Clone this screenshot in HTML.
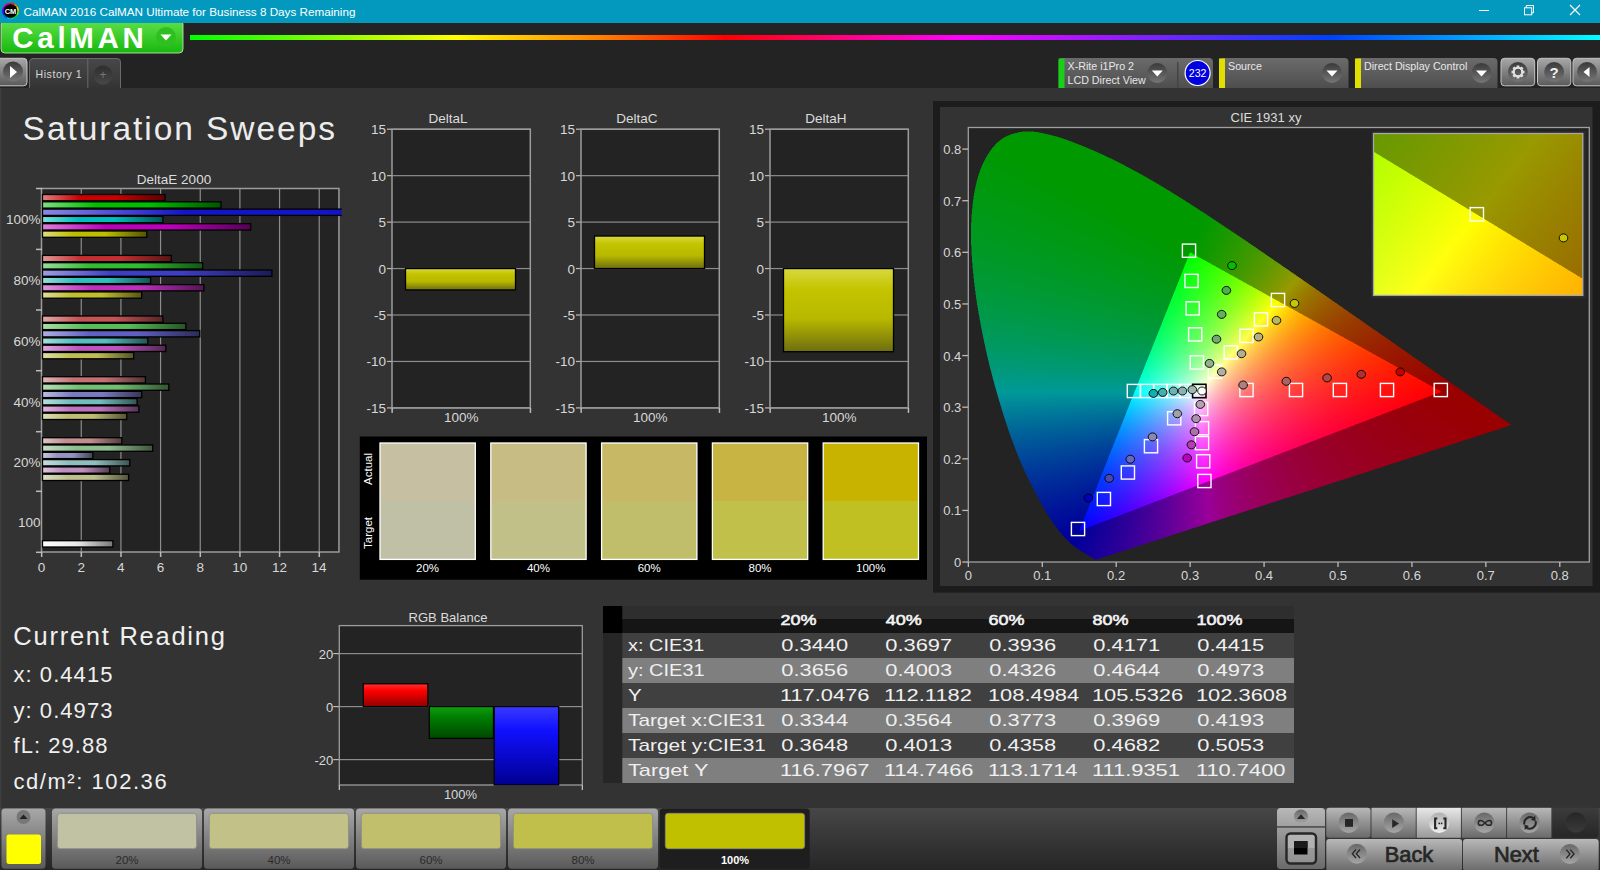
<!DOCTYPE html>
<html><head><meta charset="utf-8"><style>
html,body{margin:0;padding:0;background:#232323;width:1600px;height:870px;overflow:hidden}
svg{position:absolute;left:0;top:0}
text{font-family:"Liberation Sans", sans-serif}
canvas{position:absolute}
</style></head><body>
<svg width="1600" height="870" viewBox="0 0 1600 870"><defs><linearGradient id="rainbow" x1="0" y1="0" x2="1" y2="0"><stop offset="0" stop-color="#00ff00"/><stop offset="0.1879432624113475" stop-color="#ffff00"/><stop offset="0.2907801418439716" stop-color="#ff8000"/><stop offset="0.37943262411347517" stop-color="#ff0000"/><stop offset="0.5460992907801419" stop-color="#ff00ff"/><stop offset="0.8085106382978723" stop-color="#0040ff"/><stop offset="1" stop-color="#00ffff"/></linearGradient><linearGradient id="greenbtn" x1="0" y1="0" x2="0" y2="1"><stop offset="0" stop-color="#5fe04a"/><stop offset="0.5" stop-color="#3ccc2c"/><stop offset="1" stop-color="#16b80e"/></linearGradient><linearGradient id="devbox" x1="0" y1="0" x2="0" y2="1"><stop offset="0" stop-color="#6b6b6b"/><stop offset="1" stop-color="#4e4e4e"/></linearGradient><linearGradient id="yellowbar" x1="0" y1="0" x2="0" y2="1"><stop offset="0" stop-color="#d8d840"/><stop offset="0.25" stop-color="#c4c400"/><stop offset="0.6" stop-color="#b8b800"/><stop offset="1" stop-color="#6e6e10"/></linearGradient><linearGradient id="redbar" x1="0" y1="0" x2="0" y2="1"><stop offset="0" stop-color="#ff3030"/><stop offset="0.3" stop-color="#ff0000"/><stop offset="1" stop-color="#900000"/></linearGradient><linearGradient id="greenbar2" x1="0" y1="0" x2="0" y2="1"><stop offset="0" stop-color="#10a010"/><stop offset="0.3" stop-color="#008000"/><stop offset="1" stop-color="#004800"/></linearGradient><linearGradient id="bluebar2" x1="0" y1="0" x2="0" y2="1"><stop offset="0" stop-color="#3a3aff"/><stop offset="0.3" stop-color="#1010ff"/><stop offset="1" stop-color="#000090"/></linearGradient><linearGradient id="hdr" x1="0" y1="0" x2="0" y2="1"><stop offset="0" stop-color="#2e2e2e"/><stop offset="0.48" stop-color="#2e2e2e"/><stop offset="0.48" stop-color="#151515"/><stop offset="1" stop-color="#151515"/></linearGradient><linearGradient id="btn" x1="0" y1="0" x2="0" y2="1"><stop offset="0" stop-color="#a8a8a8"/><stop offset="1" stop-color="#5a5a5a"/></linearGradient><linearGradient id="bbar" x1="0" y1="0" x2="0" y2="1"><stop offset="0" stop-color="#474747"/><stop offset="0.5" stop-color="#363636"/><stop offset="1" stop-color="#262626"/></linearGradient><linearGradient id="circ" x1="0" y1="0" x2="0" y2="1"><stop offset="0" stop-color="#3a3a3a"/><stop offset="1" stop-color="#767676"/></linearGradient><linearGradient id="circ2" x1="0" y1="0" x2="0" y2="1"><stop offset="0" stop-color="#686868"/><stop offset="1" stop-color="#a6a6a6"/></linearGradient><linearGradient id="circhi" x1="0" y1="0" x2="0" y2="1"><stop offset="0" stop-color="#b0b0b0"/><stop offset="1" stop-color="#f0f0f0"/></linearGradient><linearGradient id="darkbtn" x1="0" y1="0" x2="0" y2="1"><stop offset="0" stop-color="#3c3c3c"/><stop offset="1" stop-color="#262626"/></linearGradient><linearGradient id="darkcirc" x1="0" y1="0" x2="0" y2="1"><stop offset="0" stop-color="#262626"/><stop offset="1" stop-color="#3a3a3a"/></linearGradient><linearGradient id="sqbtn" x1="0" y1="0" x2="0" y2="1"><stop offset="0" stop-color="#b4b4b4"/><stop offset="0.5" stop-color="#b0b0b0"/><stop offset="0.5" stop-color="#9a9a9a"/><stop offset="1" stop-color="#909090"/></linearGradient><linearGradient id="tabg" x1="0" y1="0" x2="0" y2="1"><stop offset="0" stop-color="#484848"/><stop offset="1" stop-color="#343434"/></linearGradient><linearGradient id="plusc" x1="0" y1="0" x2="0" y2="1"><stop offset="0" stop-color="#2e2e2e"/><stop offset="1" stop-color="#484848"/></linearGradient><linearGradient id="btnsel" x1="0" y1="0" x2="0" y2="1"><stop offset="0" stop-color="#2a2a2a"/><stop offset="1" stop-color="#1a1a1a"/></linearGradient><linearGradient id="ctl" x1="0" y1="0" x2="0" y2="1"><stop offset="0" stop-color="#b8b8b8"/><stop offset="1" stop-color="#6a6a6a"/></linearGradient><linearGradient id="ctlhi" x1="0" y1="0" x2="0" y2="1"><stop offset="0" stop-color="#e8e8e8"/><stop offset="1" stop-color="#9a9a9a"/></linearGradient><linearGradient id="g00" x1="0" y1="0" x2="1" y2="0"><stop offset="0" stop-color="rgb(227, 127, 127)"/><stop offset="0.3" stop-color="rgb(200, 0, 0)"/><stop offset="0.6" stop-color="rgb(200, 0, 0)"/><stop offset="1" stop-color="rgb(90, 0, 0)"/></linearGradient><linearGradient id="g01" x1="0" y1="0" x2="1" y2="0"><stop offset="0" stop-color="rgb(127, 222, 127)"/><stop offset="0.3" stop-color="rgb(0, 190, 0)"/><stop offset="0.6" stop-color="rgb(0, 190, 0)"/><stop offset="1" stop-color="rgb(0, 85, 0)"/></linearGradient><linearGradient id="g02" x1="0" y1="0" x2="1" y2="0"><stop offset="0" stop-color="rgb(137, 137, 227)"/><stop offset="0.3" stop-color="rgb(20, 20, 200)"/><stop offset="0.6" stop-color="rgb(20, 20, 200)"/><stop offset="1" stop-color="rgb(9, 9, 90)"/></linearGradient><linearGradient id="g03" x1="0" y1="0" x2="1" y2="0"><stop offset="0" stop-color="rgb(127, 222, 222)"/><stop offset="0.3" stop-color="rgb(0, 190, 190)"/><stop offset="0.6" stop-color="rgb(0, 190, 190)"/><stop offset="1" stop-color="rgb(0, 85, 85)"/></linearGradient><linearGradient id="g04" x1="0" y1="0" x2="1" y2="0"><stop offset="0" stop-color="rgb(222, 127, 222)"/><stop offset="0.3" stop-color="rgb(190, 0, 190)"/><stop offset="0.6" stop-color="rgb(190, 0, 190)"/><stop offset="1" stop-color="rgb(85, 0, 85)"/></linearGradient><linearGradient id="g05" x1="0" y1="0" x2="1" y2="0"><stop offset="0" stop-color="rgb(222, 222, 127)"/><stop offset="0.3" stop-color="rgb(190, 190, 0)"/><stop offset="0.6" stop-color="rgb(190, 190, 0)"/><stop offset="1" stop-color="rgb(85, 85, 0)"/></linearGradient><linearGradient id="g10" x1="0" y1="0" x2="1" y2="0"><stop offset="0" stop-color="rgb(226, 151, 151)"/><stop offset="0.3" stop-color="rgb(197, 47, 47)"/><stop offset="0.6" stop-color="rgb(197, 47, 47)"/><stop offset="1" stop-color="rgb(88, 21, 21)"/></linearGradient><linearGradient id="g11" x1="0" y1="0" x2="1" y2="0"><stop offset="0" stop-color="rgb(151, 222, 151)"/><stop offset="0.3" stop-color="rgb(47, 190, 47)"/><stop offset="0.6" stop-color="rgb(47, 190, 47)"/><stop offset="1" stop-color="rgb(21, 85, 21)"/></linearGradient><linearGradient id="g12" x1="0" y1="0" x2="1" y2="0"><stop offset="0" stop-color="rgb(158, 158, 226)"/><stop offset="0.3" stop-color="rgb(62, 62, 197)"/><stop offset="0.6" stop-color="rgb(62, 62, 197)"/><stop offset="1" stop-color="rgb(27, 27, 88)"/></linearGradient><linearGradient id="g13" x1="0" y1="0" x2="1" y2="0"><stop offset="0" stop-color="rgb(151, 222, 222)"/><stop offset="0.3" stop-color="rgb(47, 190, 190)"/><stop offset="0.6" stop-color="rgb(47, 190, 190)"/><stop offset="1" stop-color="rgb(21, 85, 85)"/></linearGradient><linearGradient id="g14" x1="0" y1="0" x2="1" y2="0"><stop offset="0" stop-color="rgb(222, 151, 222)"/><stop offset="0.3" stop-color="rgb(190, 47, 190)"/><stop offset="0.6" stop-color="rgb(190, 47, 190)"/><stop offset="1" stop-color="rgb(85, 21, 85)"/></linearGradient><linearGradient id="g15" x1="0" y1="0" x2="1" y2="0"><stop offset="0" stop-color="rgb(222, 222, 151)"/><stop offset="0.3" stop-color="rgb(190, 190, 47)"/><stop offset="0.6" stop-color="rgb(190, 190, 47)"/><stop offset="1" stop-color="rgb(85, 85, 21)"/></linearGradient><linearGradient id="g20" x1="0" y1="0" x2="1" y2="0"><stop offset="0" stop-color="rgb(225, 170, 170)"/><stop offset="0.3" stop-color="rgb(195, 85, 85)"/><stop offset="0.6" stop-color="rgb(195, 85, 85)"/><stop offset="1" stop-color="rgb(87, 38, 38)"/></linearGradient><linearGradient id="g21" x1="0" y1="0" x2="1" y2="0"><stop offset="0" stop-color="rgb(170, 222, 170)"/><stop offset="0.3" stop-color="rgb(85, 190, 85)"/><stop offset="0.6" stop-color="rgb(85, 190, 85)"/><stop offset="1" stop-color="rgb(38, 85, 38)"/></linearGradient><linearGradient id="g22" x1="0" y1="0" x2="1" y2="0"><stop offset="0" stop-color="rgb(175, 175, 225)"/><stop offset="0.3" stop-color="rgb(96, 96, 195)"/><stop offset="0.6" stop-color="rgb(96, 96, 195)"/><stop offset="1" stop-color="rgb(43, 43, 87)"/></linearGradient><linearGradient id="g23" x1="0" y1="0" x2="1" y2="0"><stop offset="0" stop-color="rgb(170, 222, 222)"/><stop offset="0.3" stop-color="rgb(85, 190, 190)"/><stop offset="0.6" stop-color="rgb(85, 190, 190)"/><stop offset="1" stop-color="rgb(38, 85, 85)"/></linearGradient><linearGradient id="g24" x1="0" y1="0" x2="1" y2="0"><stop offset="0" stop-color="rgb(222, 170, 222)"/><stop offset="0.3" stop-color="rgb(190, 85, 190)"/><stop offset="0.6" stop-color="rgb(190, 85, 190)"/><stop offset="1" stop-color="rgb(85, 38, 85)"/></linearGradient><linearGradient id="g25" x1="0" y1="0" x2="1" y2="0"><stop offset="0" stop-color="rgb(222, 222, 170)"/><stop offset="0.3" stop-color="rgb(190, 190, 85)"/><stop offset="0.6" stop-color="rgb(190, 190, 85)"/><stop offset="1" stop-color="rgb(85, 85, 38)"/></linearGradient><linearGradient id="g30" x1="0" y1="0" x2="1" y2="0"><stop offset="0" stop-color="rgb(224, 184, 184)"/><stop offset="0.3" stop-color="rgb(194, 114, 114)"/><stop offset="0.6" stop-color="rgb(194, 114, 114)"/><stop offset="1" stop-color="rgb(87, 51, 51)"/></linearGradient><linearGradient id="g31" x1="0" y1="0" x2="1" y2="0"><stop offset="0" stop-color="rgb(184, 222, 184)"/><stop offset="0.3" stop-color="rgb(114, 190, 114)"/><stop offset="0.6" stop-color="rgb(114, 190, 114)"/><stop offset="1" stop-color="rgb(51, 85, 51)"/></linearGradient><linearGradient id="g32" x1="0" y1="0" x2="1" y2="0"><stop offset="0" stop-color="rgb(188, 188, 224)"/><stop offset="0.3" stop-color="rgb(122, 122, 194)"/><stop offset="0.6" stop-color="rgb(122, 122, 194)"/><stop offset="1" stop-color="rgb(54, 54, 87)"/></linearGradient><linearGradient id="g33" x1="0" y1="0" x2="1" y2="0"><stop offset="0" stop-color="rgb(184, 222, 222)"/><stop offset="0.3" stop-color="rgb(114, 190, 190)"/><stop offset="0.6" stop-color="rgb(114, 190, 190)"/><stop offset="1" stop-color="rgb(51, 85, 85)"/></linearGradient><linearGradient id="g34" x1="0" y1="0" x2="1" y2="0"><stop offset="0" stop-color="rgb(222, 184, 222)"/><stop offset="0.3" stop-color="rgb(190, 114, 190)"/><stop offset="0.6" stop-color="rgb(190, 114, 190)"/><stop offset="1" stop-color="rgb(85, 51, 85)"/></linearGradient><linearGradient id="g35" x1="0" y1="0" x2="1" y2="0"><stop offset="0" stop-color="rgb(222, 222, 184)"/><stop offset="0.3" stop-color="rgb(190, 190, 114)"/><stop offset="0.6" stop-color="rgb(190, 190, 114)"/><stop offset="1" stop-color="rgb(85, 85, 51)"/></linearGradient><linearGradient id="g40" x1="0" y1="0" x2="1" y2="0"><stop offset="0" stop-color="rgb(223, 198, 198)"/><stop offset="0.3" stop-color="rgb(192, 142, 142)"/><stop offset="0.6" stop-color="rgb(192, 142, 142)"/><stop offset="1" stop-color="rgb(86, 63, 63)"/></linearGradient><linearGradient id="g41" x1="0" y1="0" x2="1" y2="0"><stop offset="0" stop-color="rgb(198, 222, 198)"/><stop offset="0.3" stop-color="rgb(142, 190, 142)"/><stop offset="0.6" stop-color="rgb(142, 190, 142)"/><stop offset="1" stop-color="rgb(63, 85, 63)"/></linearGradient><linearGradient id="g42" x1="0" y1="0" x2="1" y2="0"><stop offset="0" stop-color="rgb(201, 201, 223)"/><stop offset="0.3" stop-color="rgb(147, 147, 192)"/><stop offset="0.6" stop-color="rgb(147, 147, 192)"/><stop offset="1" stop-color="rgb(66, 66, 86)"/></linearGradient><linearGradient id="g43" x1="0" y1="0" x2="1" y2="0"><stop offset="0" stop-color="rgb(198, 222, 222)"/><stop offset="0.3" stop-color="rgb(142, 190, 190)"/><stop offset="0.6" stop-color="rgb(142, 190, 190)"/><stop offset="1" stop-color="rgb(63, 85, 85)"/></linearGradient><linearGradient id="g44" x1="0" y1="0" x2="1" y2="0"><stop offset="0" stop-color="rgb(222, 198, 222)"/><stop offset="0.3" stop-color="rgb(190, 142, 190)"/><stop offset="0.6" stop-color="rgb(190, 142, 190)"/><stop offset="1" stop-color="rgb(85, 63, 85)"/></linearGradient><linearGradient id="g45" x1="0" y1="0" x2="1" y2="0"><stop offset="0" stop-color="rgb(222, 222, 198)"/><stop offset="0.3" stop-color="rgb(190, 190, 142)"/><stop offset="0.6" stop-color="rgb(190, 190, 142)"/><stop offset="1" stop-color="rgb(85, 85, 63)"/></linearGradient><clipPath id="declip"><rect x="0" y="0" width="341.7" height="870"/></clipPath><linearGradient id="gw" x1="0" y1="0" x2="1" y2="0"><stop offset="0" stop-color="#ffffff"/><stop offset="0.5" stop-color="#e8e8e8"/><stop offset="1" stop-color="#777"/></linearGradient><linearGradient id="fbh" x1="0" y1="0" x2="0" y2="1"><stop offset="0" stop-color="#009900"/><stop offset="0.55" stop-color="#00967a"/><stop offset="0.68" stop-color="#008c99"/><stop offset="1" stop-color="#1a0099"/></linearGradient><linearGradient id="fbr" x1="0" y1="0" x2="1" y2="0"><stop offset="0" stop-color="#990000" stop-opacity="0"/><stop offset="1" stop-color="#990000"/></linearGradient><radialGradient id="fbt" cx="0.45" cy="0.6" r="0.6"><stop offset="0" stop-color="#ffffff"/><stop offset="1" stop-color="#ff40ff" stop-opacity="0.2"/></radialGradient></defs><rect x="0" y="0" width="1600" height="870" fill="#232323" /><rect x="1" y="20" width="182" height="33" rx="4" fill="url(#greenbtn)" stroke="#d0f0c0" stroke-width="0.8"/><rect x="0" y="0" width="1600" height="23" fill="#0399bf" /><circle cx="10.5" cy="11" r="8" fill="#000"/><path d="M10.50 3.40 A7.6 7.6 0 0 1 14.30 4.42" fill="none" stroke="#ff2020" stroke-width="1.5"/><path d="M14.30 4.42 A7.6 7.6 0 0 1 17.08 7.20" fill="none" stroke="#ff8000" stroke-width="1.5"/><path d="M17.08 7.20 A7.6 7.6 0 0 1 18.10 11.00" fill="none" stroke="#ffe000" stroke-width="1.5"/><path d="M18.10 11.00 A7.6 7.6 0 0 1 17.08 14.80" fill="none" stroke="#80ff00" stroke-width="1.5"/><path d="M17.08 14.80 A7.6 7.6 0 0 1 14.30 17.58" fill="none" stroke="#00e040" stroke-width="1.5"/><path d="M14.30 17.58 A7.6 7.6 0 0 1 10.50 18.60" fill="none" stroke="#00e0a0" stroke-width="1.5"/><path d="M10.50 18.60 A7.6 7.6 0 0 1 6.70 17.58" fill="none" stroke="#00c0ff" stroke-width="1.5"/><path d="M6.70 17.58 A7.6 7.6 0 0 1 3.92 14.80" fill="none" stroke="#0060ff" stroke-width="1.5"/><path d="M3.92 14.80 A7.6 7.6 0 0 1 2.90 11.00" fill="none" stroke="#2020ff" stroke-width="1.5"/><path d="M2.90 11.00 A7.6 7.6 0 0 1 3.92 7.20" fill="none" stroke="#8000ff" stroke-width="1.5"/><path d="M3.92 7.20 A7.6 7.6 0 0 1 6.70 4.42" fill="none" stroke="#e000e0" stroke-width="1.5"/><path d="M6.70 4.42 A7.6 7.6 0 0 1 10.50 3.40" fill="none" stroke="#ff0080" stroke-width="1.5"/><text x="10.5" y="14" font-size="7.5" fill="#fff" text-anchor="middle" font-weight="bold" >CM</text><text x="23.5" y="16" font-size="11.7" fill="#ffffff" text-anchor="start" >CalMAN 2016 CalMAN Ultimate for Business 8 Days Remaining</text><rect x="1479" y="10" width="10" height="1" fill="#fff" /><rect x="1524.5" y="7.8" width="7.2" height="7" fill="none" stroke="#fff"/><path d="M1526.3 7.8 V5.5 H1533.5 V12.8 H1531.7" fill="none" stroke="#fff"/><path d="M1570 5 L1580 15 M1580 5 L1570 15" stroke="#fff" stroke-width="1.2"/><text x="12.3" y="48" font-size="29.5" fill="#ffffff" text-anchor="start" letter-spacing="3.7" font-weight="bold" >CalMAN</text><circle cx="166" cy="37" r="10" fill="#2fc020"/><path d="M160.5 34.5 L171.5 34.5 L166 40.5 Z" fill="#fff"/><rect x="190" y="35" width="1410" height="5" fill="url(#rainbow)" /><rect x="-4" y="58.3" width="31" height="27.5" rx="3.5" fill="url(#btn)" stroke="#c8c8c8" stroke-width="1"/><circle cx="13" cy="71.5" r="10" fill="url(#circ)"/><path d="M10 66 L17 72 L10 78 Z" fill="#fff"/><path d="M29.5 88 V62 Q29.5 58.5 33 58.5 H117.5 Q120.5 58.5 120.5 62 V88" fill="url(#tabg)" stroke="#6a6a6a" stroke-width="1"/><rect x="87.3" y="59" width="1" height="29" fill="#6a6a6a" /><text x="35.5" y="78" font-size="10.6" fill="#d8d8d8" text-anchor="start" letter-spacing="0.55" >History 1</text><circle cx="103" cy="75" r="9.5" fill="url(#plusc)"/><text x="103" y="79" font-size="12" fill="#777" text-anchor="middle" >+</text><rect x="0" y="88" width="1600" height="720" fill="#333333" /><rect x="0" y="88" width="1.5" height="720" fill="#3e3e3e" /><path d="M1058.5 88 V62 Q1058.5 58 1062.5 58 H1209 Q1213 58 1213 62 V88 Z" fill="url(#devbox)"/><rect x="1058.5" y="58.5" width="6" height="29.5" fill="#18d018" /><text x="1067.5" y="70" font-size="10.7" fill="#e8e8e8" text-anchor="start" >X-Rite i1Pro 2</text><text x="1067.5" y="84" font-size="10.7" fill="#e8e8e8" text-anchor="start" >LCD Direct View</text><circle cx="1157.3" cy="73" r="10" fill="url(#circ)"/><path d="M1151.8 70.5 L1162.8 70.5 L1157.3 76.5 Z" fill="#fff"/><rect x="1177" y="62" width="1.5" height="26" fill="#444" /><circle cx="1197.6" cy="73" r="12.5" fill="#0000e0" stroke="#fff" stroke-width="1.2"/><text x="1197.6" y="77" font-size="10.5" fill="#ffffff" text-anchor="middle" >232</text><path d="M1219 88 V62 Q1219 58 1223 58 H1344.5 Q1348.5 58 1348.5 62 V88 Z" fill="url(#devbox)"/><rect x="1219" y="58.5" width="6" height="29.5" fill="#e0e000" /><text x="1228" y="70" font-size="10.7" fill="#e8e8e8" text-anchor="start" >Source</text><circle cx="1332" cy="73" r="10" fill="url(#circ)"/><path d="M1326.5 70.5 L1337.5 70.5 L1332 76.5 Z" fill="#fff"/><path d="M1355 88 V62 Q1355 58 1359 58 H1493.5 Q1497.5 58 1497.5 62 V88 Z" fill="url(#devbox)"/><rect x="1355" y="58.5" width="6" height="29.5" fill="#e0e000" /><text x="1364" y="70" font-size="10.7" fill="#e8e8e8" text-anchor="start" >Direct Display Control</text><circle cx="1481.5" cy="73" r="10" fill="url(#circ)"/><path d="M1476.0 70.5 L1487.0 70.5 L1481.5 76.5 Z" fill="#fff"/><rect x="1501" y="58.3" width="33.700000000000045" height="27.5" rx="3.5" fill="url(#btn)" stroke="#c4c4c4" stroke-width="1"/><circle cx="1517.85" cy="72" r="10" fill="url(#circ)"/><rect x="1537.5" y="58.3" width="33.299999999999955" height="27.5" rx="3.5" fill="url(#btn)" stroke="#c4c4c4" stroke-width="1"/><circle cx="1554.15" cy="72" r="10" fill="url(#circ)"/><rect x="1573" y="58.3" width="31" height="27.5" rx="3.5" fill="url(#btn)" stroke="#c4c4c4" stroke-width="1"/><circle cx="1587" cy="72" r="10" fill="url(#circ)"/><rect x="1516.7" y="65.5" width="2.6" height="3" fill="#e0e0e0" transform="rotate(0 1518 72)"/><rect x="1516.7" y="65.5" width="2.6" height="3" fill="#e0e0e0" transform="rotate(45 1518 72)"/><rect x="1516.7" y="65.5" width="2.6" height="3" fill="#e0e0e0" transform="rotate(90 1518 72)"/><rect x="1516.7" y="65.5" width="2.6" height="3" fill="#e0e0e0" transform="rotate(135 1518 72)"/><rect x="1516.7" y="65.5" width="2.6" height="3" fill="#e0e0e0" transform="rotate(180 1518 72)"/><rect x="1516.7" y="65.5" width="2.6" height="3" fill="#e0e0e0" transform="rotate(225 1518 72)"/><rect x="1516.7" y="65.5" width="2.6" height="3" fill="#e0e0e0" transform="rotate(270 1518 72)"/><rect x="1516.7" y="65.5" width="2.6" height="3" fill="#e0e0e0" transform="rotate(315 1518 72)"/><circle cx="1518" cy="72" r="4.3" fill="none" stroke="#e0e0e0" stroke-width="2.2"/><text x="1554" y="77.5" font-size="15" fill="#f0f0f0" text-anchor="middle" font-weight="bold" >?</text><path d="M1589.5 67 L1583.5 72 L1589.5 77 Z" fill="#fff"/><text x="22.6" y="140" font-size="33.5" fill="#ececec" text-anchor="start" letter-spacing="1.95" >Saturation Sweeps</text><text x="174" y="184" font-size="13.5" fill="#dcdcdc" text-anchor="middle" >DeltaE 2000</text><rect x="41.5" y="188.5" width="297.45" height="363.5" fill="#232323" /><rect x="80.66" y="188.5" width="1.2" height="363.5" fill="#8c8c8c" /><rect x="120.32" y="188.5" width="1.2" height="363.5" fill="#8c8c8c" /><rect x="159.98" y="188.5" width="1.2" height="363.5" fill="#8c8c8c" /><rect x="199.64" y="188.5" width="1.2" height="363.5" fill="#8c8c8c" /><rect x="239.29999999999998" y="188.5" width="1.2" height="363.5" fill="#8c8c8c" /><rect x="278.96" y="188.5" width="1.2" height="363.5" fill="#8c8c8c" /><rect x="318.62" y="188.5" width="1.2" height="363.5" fill="#8c8c8c" /><rect x="41.5" y="188.5" width="297.45" height="363.5" fill="none" stroke="#9c9c9c" stroke-width="1.5"/><rect x="36" y="187.75" width="6" height="1.5" fill="#bbbbbb" /><rect x="36" y="248.65" width="6" height="1.5" fill="#bbbbbb" /><rect x="36" y="309.25" width="6" height="1.5" fill="#bbbbbb" /><rect x="36" y="369.95" width="6" height="1.5" fill="#bbbbbb" /><rect x="36" y="430.95" width="6" height="1.5" fill="#bbbbbb" /><rect x="36" y="490.55" width="6" height="1.5" fill="#bbbbbb" /><rect x="36" y="551.55" width="6" height="1.5" fill="#bbbbbb" /><rect x="40.9" y="552" width="1.5" height="5" fill="#bbbbbb" /><text x="41.5" y="572" font-size="13.5" fill="#d8d8d8" text-anchor="middle" >0</text><rect x="80.56" y="552" width="1.5" height="5" fill="#bbbbbb" /><text x="81.16" y="572" font-size="13.5" fill="#d8d8d8" text-anchor="middle" >2</text><rect x="120.22" y="552" width="1.5" height="5" fill="#bbbbbb" /><text x="120.82" y="572" font-size="13.5" fill="#d8d8d8" text-anchor="middle" >4</text><rect x="159.88" y="552" width="1.5" height="5" fill="#bbbbbb" /><text x="160.48" y="572" font-size="13.5" fill="#d8d8d8" text-anchor="middle" >6</text><rect x="199.54" y="552" width="1.5" height="5" fill="#bbbbbb" /><text x="200.14" y="572" font-size="13.5" fill="#d8d8d8" text-anchor="middle" >8</text><rect x="239.2" y="552" width="1.5" height="5" fill="#bbbbbb" /><text x="239.79999999999998" y="572" font-size="13.5" fill="#d8d8d8" text-anchor="middle" >10</text><rect x="278.85999999999996" y="552" width="1.5" height="5" fill="#bbbbbb" /><text x="279.46" y="572" font-size="13.5" fill="#d8d8d8" text-anchor="middle" >12</text><rect x="318.52" y="552" width="1.5" height="5" fill="#bbbbbb" /><text x="319.12" y="572" font-size="13.5" fill="#d8d8d8" text-anchor="middle" >14</text><text x="40.5" y="224.45" font-size="13.5" fill="#d8d8d8" text-anchor="end" >100%</text><text x="40.5" y="285.2" font-size="13.5" fill="#d8d8d8" text-anchor="end" >80%</text><text x="40.5" y="345.85" font-size="13.5" fill="#d8d8d8" text-anchor="end" >60%</text><text x="40.5" y="406.7" font-size="13.5" fill="#d8d8d8" text-anchor="end" >40%</text><text x="40.5" y="467.0" font-size="13.5" fill="#d8d8d8" text-anchor="end" >20%</text><text x="40.5" y="527.3" font-size="13.5" fill="#d8d8d8" text-anchor="end" >100</text><rect x="42.5" y="194.5" width="122.54939999999998" height="6.3" fill="url(#g00)" stroke="#000" stroke-width="1.3"/><rect x="42.5" y="201.8" width="178.46999999999997" height="6.3" fill="url(#g01)" stroke="#000" stroke-width="1.3"/><rect x="42.5" y="209.1" width="475.91999999999996" height="6.3" fill="url(#g02)" stroke="#000" stroke-width="1.3" clip-path="url(#declip)"/><rect x="42.5" y="216.4" width="120.3681" height="6.3" fill="url(#g03)" stroke="#000" stroke-width="1.3"/><rect x="42.5" y="223.7" width="208.21499999999997" height="6.3" fill="url(#g04)" stroke="#000" stroke-width="1.3"/><rect x="42.5" y="231.0" width="104.30579999999999" height="6.3" fill="url(#g05)" stroke="#000" stroke-width="1.3"/><rect x="42.5" y="255.4" width="128.89499999999998" height="6.3" fill="url(#g10)" stroke="#000" stroke-width="1.3"/><rect x="42.5" y="262.7" width="160.22639999999998" height="6.3" fill="url(#g11)" stroke="#000" stroke-width="1.3"/><rect x="42.5" y="270.0" width="229.4331" height="6.3" fill="url(#g12)" stroke="#000" stroke-width="1.3"/><rect x="42.5" y="277.3" width="108.0735" height="6.3" fill="url(#g13)" stroke="#000" stroke-width="1.3"/><rect x="42.5" y="284.6" width="161.4162" height="6.3" fill="url(#g14)" stroke="#000" stroke-width="1.3"/><rect x="42.5" y="291.9" width="99.14999999999999" height="6.3" fill="url(#g15)" stroke="#000" stroke-width="1.3"/><rect x="42.5" y="316.0" width="120.3681" height="6.3" fill="url(#g20)" stroke="#000" stroke-width="1.3"/><rect x="42.5" y="323.3" width="143.3709" height="6.3" fill="url(#g21)" stroke="#000" stroke-width="1.3"/><rect x="42.5" y="330.6" width="157.25189999999998" height="6.3" fill="url(#g22)" stroke="#000" stroke-width="1.3"/><rect x="42.5" y="337.9" width="105.29729999999998" height="6.3" fill="url(#g23)" stroke="#000" stroke-width="1.3"/><rect x="42.5" y="345.2" width="123.34259999999999" height="6.3" fill="url(#g24)" stroke="#000" stroke-width="1.3"/><rect x="42.5" y="352.5" width="91.21799999999999" height="6.3" fill="url(#g25)" stroke="#000" stroke-width="1.3"/><rect x="42.5" y="376.7" width="102.9177" height="6.3" fill="url(#g30)" stroke="#000" stroke-width="1.3"/><rect x="42.5" y="384.0" width="126.3171" height="6.3" fill="url(#g31)" stroke="#000" stroke-width="1.3"/><rect x="42.5" y="391.3" width="99.14999999999999" height="6.3" fill="url(#g32)" stroke="#000" stroke-width="1.3"/><rect x="42.5" y="398.59999999999997" width="94.58909999999999" height="6.3" fill="url(#g33)" stroke="#000" stroke-width="1.3"/><rect x="42.5" y="405.9" width="96.3738" height="6.3" fill="url(#g34)" stroke="#000" stroke-width="1.3"/><rect x="42.5" y="413.2" width="84.27749999999999" height="6.3" fill="url(#g35)" stroke="#000" stroke-width="1.3"/><rect x="42.5" y="437.7" width="79.32" height="6.3" fill="url(#g40)" stroke="#000" stroke-width="1.3"/><rect x="42.5" y="445.0" width="110.25479999999999" height="6.3" fill="url(#g41)" stroke="#000" stroke-width="1.3"/><rect x="42.5" y="452.3" width="50.368199999999995" height="6.3" fill="url(#g42)" stroke="#000" stroke-width="1.3"/><rect x="42.5" y="459.59999999999997" width="87.252" height="6.3" fill="url(#g43)" stroke="#000" stroke-width="1.3"/><rect x="42.5" y="466.9" width="67.2237" height="6.3" fill="url(#g44)" stroke="#000" stroke-width="1.3"/><rect x="42.5" y="474.2" width="86.06219999999999" height="6.3" fill="url(#g45)" stroke="#000" stroke-width="1.3"/><rect x="42.5" y="540.7" width="70.39649999999999" height="6.3" fill="url(#gw)" stroke="#000" stroke-width="1.3"/><text x="448" y="123" font-size="13.5" fill="#dcdcdc" text-anchor="middle" >DeltaL</text><rect x="392" y="129.2" width="138.29999999999995" height="278.70000000000005" fill="#232323" /><rect x="392" y="407.3" width="138.29999999999995" height="1.2" fill="#8c8c8c" /><rect x="387" y="407.3" width="5" height="1.2" fill="#bbbbbb" /><text x="386" y="412.90000000000003" font-size="13.5" fill="#d8d8d8" text-anchor="end" >-15</text><rect x="392" y="360.84999999999997" width="138.29999999999995" height="1.2" fill="#8c8c8c" /><rect x="387" y="360.84999999999997" width="5" height="1.2" fill="#bbbbbb" /><text x="386" y="366.45" font-size="13.5" fill="#d8d8d8" text-anchor="end" >-10</text><rect x="392" y="314.4" width="138.29999999999995" height="1.2" fill="#8c8c8c" /><rect x="387" y="314.4" width="5" height="1.2" fill="#bbbbbb" /><text x="386" y="320.0" font-size="13.5" fill="#d8d8d8" text-anchor="end" >-5</text><rect x="392" y="267.95" width="138.29999999999995" height="1.2" fill="#8c8c8c" /><rect x="387" y="267.95" width="5" height="1.2" fill="#bbbbbb" /><text x="386" y="273.55" font-size="13.5" fill="#d8d8d8" text-anchor="end" >0</text><rect x="392" y="221.5" width="138.29999999999995" height="1.2" fill="#8c8c8c" /><rect x="387" y="221.5" width="5" height="1.2" fill="#bbbbbb" /><text x="386" y="227.1" font-size="13.5" fill="#d8d8d8" text-anchor="end" >5</text><rect x="392" y="175.04999999999998" width="138.29999999999995" height="1.2" fill="#8c8c8c" /><rect x="387" y="175.04999999999998" width="5" height="1.2" fill="#bbbbbb" /><text x="386" y="180.64999999999998" font-size="13.5" fill="#d8d8d8" text-anchor="end" >10</text><rect x="392" y="128.6" width="138.29999999999995" height="1.2" fill="#8c8c8c" /><rect x="387" y="128.6" width="5" height="1.2" fill="#bbbbbb" /><text x="386" y="134.2" font-size="13.5" fill="#d8d8d8" text-anchor="end" >15</text><rect x="392" y="129.2" width="138.29999999999995" height="278.70000000000005" fill="none" stroke="#9c9c9c" stroke-width="1.5"/><rect x="391.4" y="407.90000000000003" width="1.5" height="5" fill="#bbbbbb" /><rect x="529.6999999999999" y="407.90000000000003" width="1.5" height="5" fill="#bbbbbb" /><text x="461.15" y="422" font-size="13.5" fill="#d8d8d8" text-anchor="middle" >100%</text><rect x="405.5" y="268.55" width="110" height="21.36700000000002" fill="url(#yellowbar)" stroke="#000" stroke-width="1.3"/><text x="637" y="123" font-size="13.5" fill="#dcdcdc" text-anchor="middle" >DeltaC</text><rect x="581" y="129.2" width="138.29999999999995" height="278.70000000000005" fill="#232323" /><rect x="581" y="407.3" width="138.29999999999995" height="1.2" fill="#8c8c8c" /><rect x="576" y="407.3" width="5" height="1.2" fill="#bbbbbb" /><text x="575" y="412.90000000000003" font-size="13.5" fill="#d8d8d8" text-anchor="end" >-15</text><rect x="581" y="360.84999999999997" width="138.29999999999995" height="1.2" fill="#8c8c8c" /><rect x="576" y="360.84999999999997" width="5" height="1.2" fill="#bbbbbb" /><text x="575" y="366.45" font-size="13.5" fill="#d8d8d8" text-anchor="end" >-10</text><rect x="581" y="314.4" width="138.29999999999995" height="1.2" fill="#8c8c8c" /><rect x="576" y="314.4" width="5" height="1.2" fill="#bbbbbb" /><text x="575" y="320.0" font-size="13.5" fill="#d8d8d8" text-anchor="end" >-5</text><rect x="581" y="267.95" width="138.29999999999995" height="1.2" fill="#8c8c8c" /><rect x="576" y="267.95" width="5" height="1.2" fill="#bbbbbb" /><text x="575" y="273.55" font-size="13.5" fill="#d8d8d8" text-anchor="end" >0</text><rect x="581" y="221.5" width="138.29999999999995" height="1.2" fill="#8c8c8c" /><rect x="576" y="221.5" width="5" height="1.2" fill="#bbbbbb" /><text x="575" y="227.1" font-size="13.5" fill="#d8d8d8" text-anchor="end" >5</text><rect x="581" y="175.04999999999998" width="138.29999999999995" height="1.2" fill="#8c8c8c" /><rect x="576" y="175.04999999999998" width="5" height="1.2" fill="#bbbbbb" /><text x="575" y="180.64999999999998" font-size="13.5" fill="#d8d8d8" text-anchor="end" >10</text><rect x="581" y="128.6" width="138.29999999999995" height="1.2" fill="#8c8c8c" /><rect x="576" y="128.6" width="5" height="1.2" fill="#bbbbbb" /><text x="575" y="134.2" font-size="13.5" fill="#d8d8d8" text-anchor="end" >15</text><rect x="581" y="129.2" width="138.29999999999995" height="278.70000000000005" fill="none" stroke="#9c9c9c" stroke-width="1.5"/><rect x="580.4" y="407.90000000000003" width="1.5" height="5" fill="#bbbbbb" /><rect x="718.6999999999999" y="407.90000000000003" width="1.5" height="5" fill="#bbbbbb" /><text x="650.15" y="422" font-size="13.5" fill="#d8d8d8" text-anchor="middle" >100%</text><rect x="594.5" y="236.03499999999997" width="110" height="32.51500000000004" fill="url(#yellowbar)" stroke="#000" stroke-width="1.3"/><text x="826" y="123" font-size="13.5" fill="#dcdcdc" text-anchor="middle" >DeltaH</text><rect x="770" y="129.2" width="138.29999999999995" height="278.70000000000005" fill="#232323" /><rect x="770" y="407.3" width="138.29999999999995" height="1.2" fill="#8c8c8c" /><rect x="765" y="407.3" width="5" height="1.2" fill="#bbbbbb" /><text x="764" y="412.90000000000003" font-size="13.5" fill="#d8d8d8" text-anchor="end" >-15</text><rect x="770" y="360.84999999999997" width="138.29999999999995" height="1.2" fill="#8c8c8c" /><rect x="765" y="360.84999999999997" width="5" height="1.2" fill="#bbbbbb" /><text x="764" y="366.45" font-size="13.5" fill="#d8d8d8" text-anchor="end" >-10</text><rect x="770" y="314.4" width="138.29999999999995" height="1.2" fill="#8c8c8c" /><rect x="765" y="314.4" width="5" height="1.2" fill="#bbbbbb" /><text x="764" y="320.0" font-size="13.5" fill="#d8d8d8" text-anchor="end" >-5</text><rect x="770" y="267.95" width="138.29999999999995" height="1.2" fill="#8c8c8c" /><rect x="765" y="267.95" width="5" height="1.2" fill="#bbbbbb" /><text x="764" y="273.55" font-size="13.5" fill="#d8d8d8" text-anchor="end" >0</text><rect x="770" y="221.5" width="138.29999999999995" height="1.2" fill="#8c8c8c" /><rect x="765" y="221.5" width="5" height="1.2" fill="#bbbbbb" /><text x="764" y="227.1" font-size="13.5" fill="#d8d8d8" text-anchor="end" >5</text><rect x="770" y="175.04999999999998" width="138.29999999999995" height="1.2" fill="#8c8c8c" /><rect x="765" y="175.04999999999998" width="5" height="1.2" fill="#bbbbbb" /><text x="764" y="180.64999999999998" font-size="13.5" fill="#d8d8d8" text-anchor="end" >10</text><rect x="770" y="128.6" width="138.29999999999995" height="1.2" fill="#8c8c8c" /><rect x="765" y="128.6" width="5" height="1.2" fill="#bbbbbb" /><text x="764" y="134.2" font-size="13.5" fill="#d8d8d8" text-anchor="end" >15</text><rect x="770" y="129.2" width="138.29999999999995" height="278.70000000000005" fill="none" stroke="#9c9c9c" stroke-width="1.5"/><rect x="769.4" y="407.90000000000003" width="1.5" height="5" fill="#bbbbbb" /><rect x="907.6999999999999" y="407.90000000000003" width="1.5" height="5" fill="#bbbbbb" /><text x="839.15" y="422" font-size="13.5" fill="#d8d8d8" text-anchor="middle" >100%</text><rect x="783.5" y="268.55" width="110" height="83.14550000000003" fill="url(#yellowbar)" stroke="#000" stroke-width="1.3"/><rect x="359.8" y="436.5" width="567.2" height="143.2" fill="#000000" /><rect x="380.0" y="443" width="95.3" height="58" fill="#c7bfa1" /><rect x="380.0" y="501" width="95.3" height="58.4" fill="#c0c0a6" /><rect x="380.0" y="443" width="95.3" height="116.4" fill="none" stroke="#ffffff" stroke-width="1.3"/><text x="427.6" y="572" font-size="11.5" fill="#ffffff" text-anchor="middle" >20%</text><rect x="490.8" y="443" width="95.3" height="58" fill="#c7bd84" /><rect x="490.8" y="501" width="95.3" height="58.4" fill="#c0c088" /><rect x="490.8" y="443" width="95.3" height="116.4" fill="none" stroke="#ffffff" stroke-width="1.3"/><text x="538.4" y="572" font-size="11.5" fill="#ffffff" text-anchor="middle" >40%</text><rect x="601.6" y="443" width="95.3" height="58" fill="#c6b865" /><rect x="601.6" y="501" width="95.3" height="58.4" fill="#c0be6a" /><rect x="601.6" y="443" width="95.3" height="116.4" fill="none" stroke="#ffffff" stroke-width="1.3"/><text x="649.2" y="572" font-size="11.5" fill="#ffffff" text-anchor="middle" >60%</text><rect x="712.4" y="443" width="95.3" height="58" fill="#c7b443" /><rect x="712.4" y="501" width="95.3" height="58.4" fill="#c0c04a" /><rect x="712.4" y="443" width="95.3" height="116.4" fill="none" stroke="#ffffff" stroke-width="1.3"/><text x="760.0" y="572" font-size="11.5" fill="#ffffff" text-anchor="middle" >80%</text><rect x="823.2" y="443" width="95.3" height="58" fill="#c8b300" /><rect x="823.2" y="501" width="95.3" height="58.4" fill="#c1c022" /><rect x="823.2" y="443" width="95.3" height="116.4" fill="none" stroke="#ffffff" stroke-width="1.3"/><text x="870.8000000000001" y="572" font-size="11.5" fill="#ffffff" text-anchor="middle" >100%</text><text x="0" y="0" font-size="11.5" fill="#fff" text-anchor="middle" transform="translate(372 469) rotate(-90)">Actual</text><text x="0" y="0" font-size="11.5" fill="#fff" text-anchor="middle" transform="translate(372 533) rotate(-90)">Target</text><rect x="933" y="101" width="667" height="491.6" fill="#1c1c1c" /><rect x="940" y="107" width="652.5" height="479" fill="#333333" /><text x="1266" y="122" font-size="13" fill="#dcdcdc" text-anchor="middle" >CIE 1931 xy</text><rect x="968.3" y="127.5" width="621.0" height="434.5" fill="#232323" /><rect x="968.3" y="127.5" width="621.0" height="434.5" fill="none" stroke="#a0a0a0" stroke-width="1.3"/><rect x="967.6999999999999" y="562.0" width="1.3" height="5" fill="#bbbbbb" /><text x="968.3" y="579.5" font-size="13" fill="#d8d8d8" text-anchor="middle" >0</text><rect x="962.3" y="561.4" width="6" height="1.3" fill="#bbbbbb" /><text x="961.3" y="567.0" font-size="13" fill="#d8d8d8" text-anchor="end" >0</text><rect x="1041.63" y="562.0" width="1.3" height="5" fill="#bbbbbb" /><text x="1042.23" y="579.5" font-size="13" fill="#d8d8d8" text-anchor="middle" >0.1</text><rect x="962.3" y="509.78" width="6" height="1.3" fill="#bbbbbb" /><text x="961.3" y="515.38" font-size="13" fill="#d8d8d8" text-anchor="end" >0.1</text><rect x="1115.56" y="562.0" width="1.3" height="5" fill="#bbbbbb" /><text x="1116.1599999999999" y="579.5" font-size="13" fill="#d8d8d8" text-anchor="middle" >0.2</text><rect x="962.3" y="458.15999999999997" width="6" height="1.3" fill="#bbbbbb" /><text x="961.3" y="463.76" font-size="13" fill="#d8d8d8" text-anchor="end" >0.2</text><rect x="1189.49" y="562.0" width="1.3" height="5" fill="#bbbbbb" /><text x="1190.09" y="579.5" font-size="13" fill="#d8d8d8" text-anchor="middle" >0.3</text><rect x="962.3" y="406.53999999999996" width="6" height="1.3" fill="#bbbbbb" /><text x="961.3" y="412.14" font-size="13" fill="#d8d8d8" text-anchor="end" >0.3</text><rect x="1263.42" y="562.0" width="1.3" height="5" fill="#bbbbbb" /><text x="1264.02" y="579.5" font-size="13" fill="#d8d8d8" text-anchor="middle" >0.4</text><rect x="962.3" y="354.91999999999996" width="6" height="1.3" fill="#bbbbbb" /><text x="961.3" y="360.52" font-size="13" fill="#d8d8d8" text-anchor="end" >0.4</text><rect x="1337.35" y="562.0" width="1.3" height="5" fill="#bbbbbb" /><text x="1337.9499999999998" y="579.5" font-size="13" fill="#d8d8d8" text-anchor="middle" >0.5</text><rect x="962.3" y="303.29999999999995" width="6" height="1.3" fill="#bbbbbb" /><text x="961.3" y="308.9" font-size="13" fill="#d8d8d8" text-anchor="end" >0.5</text><rect x="1411.28" y="562.0" width="1.3" height="5" fill="#bbbbbb" /><text x="1411.8799999999999" y="579.5" font-size="13" fill="#d8d8d8" text-anchor="middle" >0.6</text><rect x="962.3" y="251.67999999999998" width="6" height="1.3" fill="#bbbbbb" /><text x="961.3" y="257.28" font-size="13" fill="#d8d8d8" text-anchor="end" >0.6</text><rect x="1485.21" y="562.0" width="1.3" height="5" fill="#bbbbbb" /><text x="1485.81" y="579.5" font-size="13" fill="#d8d8d8" text-anchor="middle" >0.7</text><rect x="962.3" y="200.05999999999997" width="6" height="1.3" fill="#bbbbbb" /><text x="961.3" y="205.65999999999997" font-size="13" fill="#d8d8d8" text-anchor="end" >0.7</text><rect x="1559.1399999999999" y="562.0" width="1.3" height="5" fill="#bbbbbb" /><text x="1559.7399999999998" y="579.5" font-size="13" fill="#d8d8d8" text-anchor="middle" >0.8</text><rect x="962.3" y="148.43999999999997" width="6" height="1.3" fill="#bbbbbb" /><text x="961.3" y="154.03999999999996" font-size="13" fill="#d8d8d8" text-anchor="end" >0.8</text><g id="fallback"><polygon points="1097.0,559.4 1096.4,559.5 1095.0,559.4 1093.2,558.4 1089.8,556.4 1084.1,552.9 1074.8,546.7 1060.0,532.2 1035.8,493.5 1019.1,458.4 1001.9,409.7 985.7,349.0 974.4,284.1 971.2,224.0 978.6,174.7 997.1,142.8 1023.2,131.6 1052.7,135.5 1082.7,146.0 1138.0,172.6 1191.3,204.6 1244.1,239.6 1296.6,275.7 1347.2,310.8 1393.5,343.0 1431.8,369.7 1460.5,389.6 1479.5,402.9 1491.7,411.3 1499.9,417.0 1505.0,420.6 1511.5,425.1" fill="url(#fbh)"/><polygon points="1097.0,559.4 1096.4,559.5 1095.0,559.4 1093.2,558.4 1089.8,556.4 1084.1,552.9 1074.8,546.7 1060.0,532.2 1035.8,493.5 1019.1,458.4 1001.9,409.7 985.7,349.0 974.4,284.1 971.2,224.0 978.6,174.7 997.1,142.8 1023.2,131.6 1052.7,135.5 1082.7,146.0 1138.0,172.6 1191.3,204.6 1244.1,239.6 1296.6,275.7 1347.2,310.8 1393.5,343.0 1431.8,369.7 1460.5,389.6 1479.5,402.9 1491.7,411.3 1499.9,417.0 1505.0,420.6 1511.5,425.1" fill="url(#fbr)"/><polygon points="1441.5,391.7 1190.1,252.3 1079.2,531.0" fill="#ff2020"/><polygon points="1441.5,391.7 1190.1,252.3 1079.2,531.0" fill="url(#fbt)"/></g><text x="13.3" y="645" font-size="25.5" fill="#f0f0f0" text-anchor="start" letter-spacing="1.75" >Current Reading</text><text x="13.5" y="682.0" font-size="22" fill="#f0f0f0" text-anchor="start" letter-spacing="1.05" >x: 0.4415</text><text x="13.5" y="717.6" font-size="22" fill="#f0f0f0" text-anchor="start" letter-spacing="1.05" >y: 0.4973</text><text x="13.5" y="753.2" font-size="22" fill="#f0f0f0" text-anchor="start" letter-spacing="1.05" >fL: 29.88</text><text x="13.5" y="788.8" font-size="22" fill="#f0f0f0" text-anchor="start" letter-spacing="1.55" >cd/m²: 102.36</text><text x="448" y="621.5" font-size="13" fill="#dcdcdc" text-anchor="middle" >RGB Balance</text><rect x="339.3" y="625.6" width="242.99999999999994" height="159.39999999999998" fill="#232323" /><rect x="339.3" y="653.0" width="242.99999999999994" height="1.2" fill="#8c8c8c" /><rect x="333.3" y="653.0" width="6" height="1.2" fill="#bbbbbb" /><text x="333.3" y="658.6" font-size="13" fill="#d8d8d8" text-anchor="end" >20</text><rect x="339.3" y="706.0" width="242.99999999999994" height="1.2" fill="#8c8c8c" /><rect x="333.3" y="706.0" width="6" height="1.2" fill="#bbbbbb" /><text x="333.3" y="711.6" font-size="13" fill="#d8d8d8" text-anchor="end" >0</text><rect x="339.3" y="759.0" width="242.99999999999994" height="1.2" fill="#8c8c8c" /><rect x="333.3" y="759.0" width="6" height="1.2" fill="#bbbbbb" /><text x="333.3" y="764.6" font-size="13" fill="#d8d8d8" text-anchor="end" >-20</text><rect x="339.3" y="625.6" width="242.99999999999994" height="159.39999999999998" fill="none" stroke="#9c9c9c" stroke-width="1.3"/><rect x="338.7" y="785" width="1.3" height="5" fill="#bbbbbb" /><rect x="581.6999999999999" y="785" width="1.3" height="5" fill="#bbbbbb" /><text x="460.5" y="799" font-size="13" fill="#d8d8d8" text-anchor="middle" >100%</text><rect x="363.3" y="683.8100000000001" width="64.5" height="22.789999999999964" fill="url(#redbar)" stroke="#000" stroke-width="1.2"/><rect x="429.3" y="706.6" width="64.1" height="31.799999999999955" fill="url(#greenbar2)" stroke="#000" stroke-width="1.2"/><rect x="494.2" y="706.6" width="64.5" height="78.39999999999998" fill="url(#bluebar2)" stroke="#000" stroke-width="1.2"/><rect x="603" y="606" width="691" height="27" fill="url(#hdr)" /><rect x="603" y="606" width="19.3" height="27" fill="#000" /><text transform="translate(780.55 625.2) scale(1.2500 1)" font-size="14.4" fill="#f4f4f4" stroke="#f4f4f4" stroke-width="0.55">20%</text><text transform="translate(885.80 625.2) scale(1.2500 1)" font-size="14.4" fill="#f4f4f4" stroke="#f4f4f4" stroke-width="0.55">40%</text><text transform="translate(988.55 625.2) scale(1.2500 1)" font-size="14.4" fill="#f4f4f4" stroke="#f4f4f4" stroke-width="0.55">60%</text><text transform="translate(1092.55 625.2) scale(1.2500 1)" font-size="14.4" fill="#f4f4f4" stroke="#f4f4f4" stroke-width="0.55">80%</text><text transform="translate(1196.55 625.2) scale(1.2500 1)" font-size="14.4" fill="#f4f4f4" stroke="#f4f4f4" stroke-width="0.55">100%</text><rect x="603" y="633" width="691" height="25" fill="#404040" /><rect x="603" y="633" width="19.3" height="25" fill="#262626" /><rect x="603" y="658" width="691" height="25" fill="#7f7f7f" /><rect x="603" y="658" width="19.3" height="25" fill="#262626" /><rect x="603" y="683" width="691" height="25" fill="#404040" /><rect x="603" y="683" width="19.3" height="25" fill="#262626" /><rect x="603" y="708" width="691" height="25" fill="#7f7f7f" /><rect x="603" y="708" width="19.3" height="25" fill="#262626" /><rect x="603" y="733" width="691" height="25" fill="#404040" /><rect x="603" y="733" width="19.3" height="25" fill="#262626" /><rect x="603" y="758" width="691" height="25" fill="#7f7f7f" /><rect x="603" y="758" width="19.3" height="25" fill="#262626" /><text transform="translate(628.00 651.3) scale(1.2600 1)" font-size="15.8" fill="#f0f0f0" >x: CIE31</text><text transform="translate(628.00 676.3) scale(1.2667 1)" font-size="15.8" fill="#f0f0f0" >y: CIE31</text><text transform="translate(628.00 701.3) scale(1.3000 1)" font-size="15.8" fill="#f0f0f0" >Y</text><text transform="translate(628.00 726.3) scale(1.3154 1)" font-size="15.8" fill="#f0f0f0" >Target x:CIE31</text><text transform="translate(628.00 751.3) scale(1.3202 1)" font-size="15.8" fill="#f0f0f0" >Target y:CIE31</text><text transform="translate(628.00 776.3) scale(1.3759 1)" font-size="15.8" fill="#f0f0f0" >Target Y</text><text transform="translate(781.30 651.3) scale(1.3850 1)" font-size="15.8" fill="#f0f0f0" >0.3440</text><text transform="translate(885.30 651.3) scale(1.3850 1)" font-size="15.8" fill="#f0f0f0" >0.3697</text><text transform="translate(989.30 651.3) scale(1.3850 1)" font-size="15.8" fill="#f0f0f0" >0.3936</text><text transform="translate(1093.30 651.3) scale(1.3850 1)" font-size="15.8" fill="#f0f0f0" >0.4171</text><text transform="translate(1197.30 651.3) scale(1.3850 1)" font-size="15.8" fill="#f0f0f0" >0.4415</text><text transform="translate(781.30 676.3) scale(1.3850 1)" font-size="15.8" fill="#f0f0f0" >0.3656</text><text transform="translate(885.30 676.3) scale(1.3850 1)" font-size="15.8" fill="#f0f0f0" >0.4003</text><text transform="translate(989.30 676.3) scale(1.3850 1)" font-size="15.8" fill="#f0f0f0" >0.4326</text><text transform="translate(1093.30 676.3) scale(1.3850 1)" font-size="15.8" fill="#f0f0f0" >0.4644</text><text transform="translate(1197.30 676.3) scale(1.3850 1)" font-size="15.8" fill="#f0f0f0" >0.4973</text><text transform="translate(779.91 701.3) scale(1.3850 1)" font-size="15.8" fill="#f0f0f0" >117.0476</text><text transform="translate(883.91 701.3) scale(1.3850 1)" font-size="15.8" fill="#f0f0f0" >112.1182</text><text transform="translate(987.91 701.3) scale(1.3850 1)" font-size="15.8" fill="#f0f0f0" >108.4984</text><text transform="translate(1091.91 701.3) scale(1.3850 1)" font-size="15.8" fill="#f0f0f0" >105.5326</text><text transform="translate(1195.91 701.3) scale(1.3850 1)" font-size="15.8" fill="#f0f0f0" >102.3608</text><text transform="translate(781.30 726.3) scale(1.3850 1)" font-size="15.8" fill="#f0f0f0" >0.3344</text><text transform="translate(885.30 726.3) scale(1.3850 1)" font-size="15.8" fill="#f0f0f0" >0.3564</text><text transform="translate(989.30 726.3) scale(1.3850 1)" font-size="15.8" fill="#f0f0f0" >0.3773</text><text transform="translate(1093.30 726.3) scale(1.3850 1)" font-size="15.8" fill="#f0f0f0" >0.3969</text><text transform="translate(1197.30 726.3) scale(1.3850 1)" font-size="15.8" fill="#f0f0f0" >0.4193</text><text transform="translate(781.30 751.3) scale(1.3850 1)" font-size="15.8" fill="#f0f0f0" >0.3648</text><text transform="translate(885.30 751.3) scale(1.3850 1)" font-size="15.8" fill="#f0f0f0" >0.4013</text><text transform="translate(989.30 751.3) scale(1.3850 1)" font-size="15.8" fill="#f0f0f0" >0.4358</text><text transform="translate(1093.30 751.3) scale(1.3850 1)" font-size="15.8" fill="#f0f0f0" >0.4682</text><text transform="translate(1197.30 751.3) scale(1.3850 1)" font-size="15.8" fill="#f0f0f0" >0.5053</text><text transform="translate(779.91 776.3) scale(1.3850 1)" font-size="15.8" fill="#f0f0f0" >116.7967</text><text transform="translate(883.91 776.3) scale(1.3850 1)" font-size="15.8" fill="#f0f0f0" >114.7466</text><text transform="translate(987.91 776.3) scale(1.3850 1)" font-size="15.8" fill="#f0f0f0" >113.1714</text><text transform="translate(1091.91 776.3) scale(1.3850 1)" font-size="15.8" fill="#f0f0f0" >111.9351</text><text transform="translate(1195.91 776.3) scale(1.3850 1)" font-size="15.8" fill="#f0f0f0" >110.7400</text><rect x="0" y="808" width="1600" height="62" fill="url(#bbar)" /><rect x="1.5" y="808.5" width="44" height="60.3" rx="3.5" fill="url(#btn)"/><circle cx="23.5" cy="817" r="7" fill="#777"/><path d="M19.5 819 L27.5 819 L23.5 814.5 Z" fill="#222"/><rect x="6.5" y="834.5" width="34.5" height="29.5" rx="2.5" fill="#ffff00"/><rect x="52" y="808.5" width="150" height="60.3" rx="3.5" fill="url(#btn)"/><text x="127" y="863.5" font-size="11.5" fill="#2a2a2a" text-anchor="middle" >20%</text><rect x="57.3" y="813.3" width="139.3" height="35.4" rx="3" fill="#c1c1a3" stroke="#888" stroke-width="0.8"/><rect x="204" y="808.5" width="150" height="60.3" rx="3.5" fill="url(#btn)"/><text x="279" y="863.5" font-size="11.5" fill="#2a2a2a" text-anchor="middle" >40%</text><rect x="209.3" y="813.3" width="139.3" height="35.4" rx="3" fill="#c2c187" stroke="#888" stroke-width="0.8"/><rect x="356" y="808.5" width="150" height="60.3" rx="3.5" fill="url(#btn)"/><text x="431" y="863.5" font-size="11.5" fill="#2a2a2a" text-anchor="middle" >60%</text><rect x="361.3" y="813.3" width="139.3" height="35.4" rx="3" fill="#c1bf6b" stroke="#888" stroke-width="0.8"/><rect x="508" y="808.5" width="150" height="60.3" rx="3.5" fill="url(#btn)"/><text x="583" y="863.5" font-size="11.5" fill="#2a2a2a" text-anchor="middle" >80%</text><rect x="513.3" y="813.3" width="139.3" height="35.4" rx="3" fill="#c0bf4b" stroke="#888" stroke-width="0.8"/><rect x="659.7" y="808.5" width="150" height="60.3" rx="3.5" fill="#1e1e1e"/><text x="735" y="863.5" font-size="11" fill="#ffffff" text-anchor="middle" font-weight="bold" >100%</text><rect x="665.3" y="813.3" width="139.3" height="35.4" rx="3" fill="#c0c000" stroke="#888" stroke-width="0.8"/><rect x="1277" y="808" width="48" height="61" rx="3.5" fill="url(#ctl)"/><rect x="1277" y="826.3" width="48" height="1.3" fill="#3a3a3a" /><circle cx="1301" cy="816.5" r="7" fill="url(#circ2)"/><path d="M1296.8 819 L1305.2 819 L1301 814.3 Z" fill="#2a2a2a"/><rect x="1286.5" y="833.5" width="29.5" height="30" rx="4" fill="url(#sqbtn)" stroke="#262626" stroke-width="2.4"/><rect x="1294" y="841" width="13.5" height="13.5" fill="#000" /><rect x="1294" y="841" width="13.5" height="7" fill="#1a1a1a" /><rect x="1326.3" y="807.8" width="44.2" height="30" rx="3" fill="url(#ctl)"/><circle cx="1348.7" cy="822.8" r="10.2" fill="url(#circ2)"/><rect x="1371.5" y="807.8" width="44.2" height="30" rx="0" fill="url(#ctl)"/><circle cx="1393.9" cy="822.8" r="10.2" fill="url(#circ2)"/><rect x="1416.7" y="807.8" width="44.2" height="30" rx="0" fill="url(#ctlhi)"/><circle cx="1439.1000000000001" cy="822.8" r="10.2" fill="url(#circhi)"/><rect x="1461.9" y="807.8" width="44.2" height="30" rx="0" fill="url(#ctl)"/><circle cx="1484.3000000000002" cy="822.8" r="10.2" fill="url(#circ2)"/><rect x="1507.1" y="807.8" width="44.2" height="30" rx="0" fill="url(#ctl)"/><circle cx="1529.5" cy="822.8" r="10.2" fill="url(#circ2)"/><path d="M1552.3 807.8 H1595.5 Q1598.7 807.8 1598.7 811 V834.6 Q1598.7 837.8 1595.5 837.8 H1552.3 Z" fill="url(#darkbtn)"/><circle cx="1575.9" cy="822.5" r="10.2" fill="url(#darkcirc)"/><rect x="1345" y="819" width="8" height="7.8" fill="#262626" /><path d="M1392.2 819.3 L1399 823.6 L1392.2 828 Z" fill="#262626"/><path d="M1437.3 818.5 H1435.1 V828.3 H1437.3 M1443.3 818.5 H1445.5 V828.3 H1443.3" fill="none" stroke="#262626" stroke-width="2.1"/><rect x="1438.4" y="822.6" width="1.6" height="1.6" fill="#262626" /><rect x="1440.8" y="822.6" width="1.6" height="1.6" fill="#262626" /><path d="M1484.9 822.9 C1482 819.5 1478.3 819.8 1478.3 822.9 C1478.3 826 1482 826.3 1484.9 822.9 C1487.8 819.5 1491.5 819.8 1491.5 822.9 C1491.5 826 1487.8 826.3 1484.9 822.9 Z" fill="none" stroke="#262626" stroke-width="1.5"/><path d="M1524.4 824.5 A6 6 0 0 1 1533.8 818.3 M1535.6 821.3 A6 6 0 0 1 1526.2 827.5" fill="none" stroke="#262626" stroke-width="2"/><path d="M1535.2 815.6 L1535.6 821.3 L1531 819.8 Z M1524.8 830 L1524.4 824.5 L1529 826 Z" fill="#262626"/><rect x="1326.3" y="839" width="135.8" height="32" rx="3" fill="url(#ctl)"/><rect x="1463" y="839" width="135.7" height="32" rx="3" fill="url(#ctl)"/><circle cx="1356.8" cy="853.8" r="10" fill="url(#circ2)"/><circle cx="1569.8" cy="854" r="10" fill="url(#circ2)"/><path d="M1356 849.5 L1352.3 853.8 L1356 858 M1360 849.5 L1356.3 853.8 L1360 858" fill="none" stroke="#262626" stroke-width="1.3"/><path d="M1566.3 849.7 L1570 854 L1566.3 858.2 M1570.3 849.7 L1574 854 L1570.3 858.2" fill="none" stroke="#262626" stroke-width="1.3"/><text x="1409" y="861.8" font-size="21.8" fill="#262626" text-anchor="middle" stroke="#262626" stroke-width="0.7">Back</text><text x="1516.4" y="861.8" font-size="21.8" fill="#262626" text-anchor="middle" stroke="#262626" stroke-width="0.7">Next</text></svg>
<canvas id="cie" width="621" height="435" style="left:968px;top:127px"></canvas>
<svg width="1600" height="870" viewBox="0 0 1600 870" style="pointer-events:none"><rect x="1182.4" y="244.1" width="13.2" height="13.2" fill="none" stroke="#fff" stroke-width="1.4"/><rect x="1184.9" y="274.29999999999995" width="13.2" height="13.2" fill="none" stroke="#fff" stroke-width="1.4"/><rect x="1186.1000000000001" y="301.79999999999995" width="13.2" height="13.2" fill="none" stroke="#fff" stroke-width="1.4"/><rect x="1188.6000000000001" y="327.79999999999995" width="13.2" height="13.2" fill="none" stroke="#fff" stroke-width="1.4"/><rect x="1190.3000000000002" y="355.79999999999995" width="13.2" height="13.2" fill="none" stroke="#fff" stroke-width="1.4"/><rect x="1271.4" y="293.4" width="13.2" height="13.2" fill="none" stroke="#fff" stroke-width="1.4"/><rect x="1254.4" y="312.7" width="13.2" height="13.2" fill="none" stroke="#fff" stroke-width="1.4"/><rect x="1239.9" y="329.29999999999995" width="13.2" height="13.2" fill="none" stroke="#fff" stroke-width="1.4"/><rect x="1224.2" y="345.79999999999995" width="13.2" height="13.2" fill="none" stroke="#fff" stroke-width="1.4"/><rect x="1208.3000000000002" y="365.09999999999997" width="13.2" height="13.2" fill="none" stroke="#fff" stroke-width="1.4"/><rect x="1127.3000000000002" y="384.4" width="13.2" height="13.2" fill="none" stroke="#fff" stroke-width="1.4"/><rect x="1140.4" y="384.4" width="13.2" height="13.2" fill="none" stroke="#fff" stroke-width="1.4"/><rect x="1153.7" y="384.4" width="13.2" height="13.2" fill="none" stroke="#fff" stroke-width="1.4"/><rect x="1166.9" y="384.4" width="13.2" height="13.2" fill="none" stroke="#fff" stroke-width="1.4"/><rect x="1180.2" y="384.4" width="13.2" height="13.2" fill="none" stroke="#fff" stroke-width="1.4"/><rect x="1434.2" y="383.4" width="13.2" height="13.2" fill="none" stroke="#fff" stroke-width="1.4"/><rect x="1380.4" y="383.4" width="13.2" height="13.2" fill="none" stroke="#fff" stroke-width="1.4"/><rect x="1333.3000000000002" y="383.4" width="13.2" height="13.2" fill="none" stroke="#fff" stroke-width="1.4"/><rect x="1289.4" y="383.4" width="13.2" height="13.2" fill="none" stroke="#fff" stroke-width="1.4"/><rect x="1239.9" y="383.4" width="13.2" height="13.2" fill="none" stroke="#fff" stroke-width="1.4"/><rect x="1071.4" y="522.4" width="13.2" height="13.2" fill="none" stroke="#fff" stroke-width="1.4"/><rect x="1097.3000000000002" y="492.4" width="13.2" height="13.2" fill="none" stroke="#fff" stroke-width="1.4"/><rect x="1121.3000000000002" y="465.9" width="13.2" height="13.2" fill="none" stroke="#fff" stroke-width="1.4"/><rect x="1144.4" y="439.59999999999997" width="13.2" height="13.2" fill="none" stroke="#fff" stroke-width="1.4"/><rect x="1167.6000000000001" y="411.7" width="13.2" height="13.2" fill="none" stroke="#fff" stroke-width="1.4"/><rect x="1197.8000000000002" y="474.4" width="13.2" height="13.2" fill="none" stroke="#fff" stroke-width="1.4"/><rect x="1196.6000000000001" y="454.7" width="13.2" height="13.2" fill="none" stroke="#fff" stroke-width="1.4"/><rect x="1195.4" y="436.5" width="13.2" height="13.2" fill="none" stroke="#fff" stroke-width="1.4"/><rect x="1195.4" y="421.59999999999997" width="13.2" height="13.2" fill="none" stroke="#fff" stroke-width="1.4"/><rect x="1194.5" y="402.4" width="13.2" height="13.2" fill="none" stroke="#fff" stroke-width="1.4"/><rect x="1192.6" y="384.3" width="13.4" height="13.4" fill="none" stroke="#000" stroke-width="1.6"/><ellipse cx="1232" cy="265.6" rx="4.3" ry="4" fill="#00c000" stroke="#000" stroke-width="0.9"/><ellipse cx="1226.4" cy="290.4" rx="4.3" ry="4" fill="#4cb04c" stroke="#000" stroke-width="0.9"/><ellipse cx="1221.7" cy="314.4" rx="4.3" ry="4" fill="#60b060" stroke="#000" stroke-width="0.9"/><ellipse cx="1216.5" cy="339.2" rx="4.3" ry="4" fill="#74a874" stroke="#000" stroke-width="0.9"/><ellipse cx="1209.5" cy="363.4" rx="4.3" ry="4" fill="#90b090" stroke="#000" stroke-width="0.9"/><ellipse cx="1294.5" cy="303.4" rx="4.3" ry="4" fill="#c8c800" stroke="#000" stroke-width="0.9"/><ellipse cx="1276.5" cy="320.4" rx="4.3" ry="4" fill="#b8b860" stroke="#000" stroke-width="0.9"/><ellipse cx="1258.5" cy="337" rx="4.3" ry="4" fill="#b0b080" stroke="#000" stroke-width="0.9"/><ellipse cx="1241.5" cy="353.7" rx="4.3" ry="4" fill="#b0b090" stroke="#000" stroke-width="0.9"/><ellipse cx="1221.7" cy="371.9" rx="4.3" ry="4" fill="#b0b0a0" stroke="#000" stroke-width="0.9"/><ellipse cx="1153.4" cy="393.4" rx="4.3" ry="4" fill="#10b0b0" stroke="#000" stroke-width="0.9"/><ellipse cx="1162.7" cy="392.4" rx="4.3" ry="4" fill="#40b0b0" stroke="#000" stroke-width="0.9"/><ellipse cx="1173.5" cy="391" rx="4.3" ry="4" fill="#70b0b0" stroke="#000" stroke-width="0.9"/><ellipse cx="1182.4" cy="391" rx="4.3" ry="4" fill="#90b0b0" stroke="#000" stroke-width="0.9"/><ellipse cx="1192.3" cy="389.7" rx="4.3" ry="4" fill="#a0b8b0" stroke="#000" stroke-width="0.9"/><ellipse cx="1400.3" cy="371.9" rx="4.3" ry="4" fill="#c00000" stroke="#000" stroke-width="0.9"/><ellipse cx="1361.3" cy="374.3" rx="4.3" ry="4" fill="#b03030" stroke="#000" stroke-width="0.9"/><ellipse cx="1327.1" cy="377.9" rx="4.3" ry="4" fill="#b04848" stroke="#000" stroke-width="0.9"/><ellipse cx="1286.3" cy="381.3" rx="4.3" ry="4" fill="#b06060" stroke="#000" stroke-width="0.9"/><ellipse cx="1243.1" cy="385" rx="4.3" ry="4" fill="#b08080" stroke="#000" stroke-width="0.9"/><ellipse cx="1088.3" cy="498" rx="4.3" ry="4" fill="#0000c0" stroke="#000" stroke-width="0.9"/><ellipse cx="1109.2" cy="478.3" rx="4.3" ry="4" fill="#4848b0" stroke="#000" stroke-width="0.9"/><ellipse cx="1130.3" cy="459.2" rx="4.3" ry="4" fill="#6868c0" stroke="#000" stroke-width="0.9"/><ellipse cx="1152.5" cy="436.9" rx="4.3" ry="4" fill="#8888b0" stroke="#000" stroke-width="0.9"/><ellipse cx="1177.3" cy="413.7" rx="4.3" ry="4" fill="#a0a0b0" stroke="#000" stroke-width="0.9"/><ellipse cx="1187.2" cy="458" rx="4.3" ry="4" fill="#c000c0" stroke="#000" stroke-width="0.9"/><ellipse cx="1191.4" cy="444.8" rx="4.3" ry="4" fill="#b040b0" stroke="#000" stroke-width="0.9"/><ellipse cx="1194.5" cy="431.7" rx="4.3" ry="4" fill="#b070b0" stroke="#000" stroke-width="0.9"/><ellipse cx="1196.1" cy="418.7" rx="4.3" ry="4" fill="#b090b0" stroke="#000" stroke-width="0.9"/><ellipse cx="1200.3" cy="404.4" rx="4.3" ry="4" fill="#b8a0b8" stroke="#000" stroke-width="0.9"/><ellipse cx="1202" cy="391" rx="4.3" ry="4" fill="#ffffff" stroke="#000" stroke-width="0.9"/><rect x="1371" y="131" width="215" height="167.6" fill="#2a2a2a"/><g id="fallback2"><defs><linearGradient id="fbi" x1="0" y1="0.2" x2="1" y2="0.8"><stop offset="0" stop-color="#b0ff00"/><stop offset="0.5" stop-color="#ffff00"/><stop offset="1" stop-color="#ffb000"/></linearGradient></defs><rect x="1374" y="134" width="209" height="162" fill="url(#fbi)"/><polygon points="1374,134 1583,134 1583,278 1374,151" fill="#8a8a00"/></g></svg>
<canvas id="ins" width="209" height="162" style="left:1374px;top:134px"></canvas>
<svg width="1600" height="870" viewBox="0 0 1600 870" style="pointer-events:none"><rect x="1373.5" y="133.5" width="209.3" height="161.9" fill="none" stroke="#a8a8a8" stroke-width="1.3"/><rect x="1470.1" y="207.6" width="13.4" height="13.4" fill="none" stroke="#fff" stroke-width="1.4"/><ellipse cx="1563.5" cy="237.9" rx="4.3" ry="4" fill="#c8c800" stroke="#000" stroke-width="0.9"/></svg>
<script>(function(){
var fb=document.getElementById('fallback');if(fb)fb.style.display='none';var fb2=document.getElementById('fallback2');if(fb2)fb2.style.display='none';
var L=[[0.1741,0.0050],[0.1738,0.0049],[0.1733,0.0048],[0.1726,0.0048],[0.1714,0.0051],[0.1703,0.0058],[0.1689,0.0069],[0.1669,0.0086],[0.1644,0.0109],[0.1611,0.0138],[0.1566,0.0177],[0.1510,0.0227],[0.1440,0.0297],[0.1355,0.0399],[0.1241,0.0578],[0.1096,0.0868],[0.0913,0.1327],[0.0687,0.2007],[0.0454,0.2950],[0.0235,0.4127],[0.0082,0.5384],[0.0039,0.6548],[0.0139,0.7502],[0.0389,0.8120],[0.0743,0.8338],[0.1142,0.8262],[0.1547,0.8059],[0.1929,0.7816],[0.2296,0.7543],[0.2658,0.7243],[0.3016,0.6923],[0.3373,0.6589],[0.3731,0.6245],[0.4087,0.5896],[0.4441,0.5547],[0.4788,0.5202],[0.5125,0.4866],[0.5448,0.4544],[0.5752,0.4242],[0.6029,0.3965],[0.6270,0.3725],[0.6482,0.3514],[0.6658,0.3340],[0.6801,0.3197],[0.6915,0.3083],[0.7006,0.2993],[0.7079,0.2920],[0.7140,0.2859],[0.7190,0.2809],[0.7230,0.2770],[0.7260,0.2740],[0.7283,0.2717],[0.7300,0.2700],[0.7320,0.2680],[0.7347,0.2653]];
(function(){var P=[];var m=L.length;for(var i=0;i<m-1;i++){var p0=L[Math.max(0,i-1)],p1=L[i],p2=L[i+1],p3=L[Math.min(m-1,i+2)];for(var t=0;t<1;t+=0.125){var t2=t*t,t3=t2*t;var f=function(a,b,c,d){return 0.5*((2*b)+(-a+c)*t+(2*a-5*b+4*c-d)*t2+(-a+3*b-3*c+d)*t3);};P.push([f(p0[0],p1[0],p2[0],p3[0]),f(p0[1],p1[1],p2[1],p3[1])]);}}P.push(L[m-1]);L=P;})();
var n=L.length;
var T=[[0.64,0.33],[0.30,0.60],[0.15,0.06]];
function side(ax,ay,bx,by,x,y){return (bx-ax)*(y-ay)-(by-ay)*(x-ax);}
function inTri(x,y){var d1=side(T[0][0],T[0][1],T[1][0],T[1][1],x,y),d2=side(T[1][0],T[1][1],T[2][0],T[2][1],x,y),d3=side(T[2][0],T[2][1],T[0][0],T[0][1],x,y);var neg=(d1<0)||(d2<0)||(d3<0),pos=(d1>0)||(d2>0)||(d3>0);return !(neg&&pos);}
function col(x,y,dim,out){var X=x/y,Z=(1-x-y)/y;var r=3.2406*X-1.5372-0.4986*Z,g=-0.9689*X+1.8758+0.0415*Z,b=0.0557*X-0.2040+1.0570*Z;if(r<0)r=0;if(g<0)g=0;if(b<0)b=0;var m=Math.max(r,g,b);if(m<=0)m=1;var k=(dim?0.6:1)*255/m;out[0]=r*k;out[1]=g*k;out[2]=b*k;}
function crossings(y){var xs=[];for(var i=0,j=n-1;i<n;j=i++){var xi=L[i][0],yi=L[i][1],xj=L[j][0],yj=L[j][1];if((yi>y)!=(yj>y))xs.push((xj-xi)*(y-yi)/(yj-yi)+xi);}xs.sort(function(a,b){return a-b;});return xs;}
function inside(xs,x){var c=0;for(var k=0;k<xs.length;k++){if(xs[k]<x)c++;else break;}return (c&1)==1;}
function draw(id,ox,oy,w,h,fx,fy,ifx){
 var cv=document.getElementById(id);if(!cv||!cv.getContext)return;var ctx=cv.getContext('2d');var im=ctx.createImageData(w,h);var d=im.data;
 var c1=[0,0,0],c2=[0,0,0];
 for(var j=0;j<h;j++){
  var ya=fy(oy+j+0.25),yb=fy(oy+j+0.75);
  var xa=crossings(ya),xb=crossings(yb);
  for(var i=0;i<w;i++){
   var x0=fx(ox+i+0.25),x1=fx(ox+i+0.75);
   var cov=0,tri=0;
   if(inside(xa,x0)){cov++;if(inTri(x0,ya))tri++;}
   if(inside(xa,x1)){cov++;if(inTri(x1,ya))tri++;}
   if(inside(xb,x0)){cov++;if(inTri(x0,yb))tri++;}
   if(inside(xb,x1)){cov++;if(inTri(x1,yb))tri++;}
   if(cov==0)continue;
   var x=fx(ox+i+0.5),y=fy(oy+j+0.5);if(y<0.003)y=0.003;
   var o=(j*w+i)*4;var t=tri/cov;
   col(x,y,false,c1);col(x,y,true,c2);
   d[o]=c1[0]*t+c2[0]*(1-t);d[o+1]=c1[1]*t+c2[1]*(1-t);d[o+2]=c1[2]*t+c2[2]*(1-t);d[o+3]=255*cov/4;
  }
 }
 ctx.putImageData(im,0,0);
}
draw('cie',968,127,621,435,function(px){return (px-968.3)/739.3;},function(py){return (562-py)/516.2;});
draw('ins',1374,134,209,162,function(px){return 0.4193+(px-1476.8)/3905;},function(py){return 0.5053-(py-214.3)/2988;});
})();
</script>
</body></html>
